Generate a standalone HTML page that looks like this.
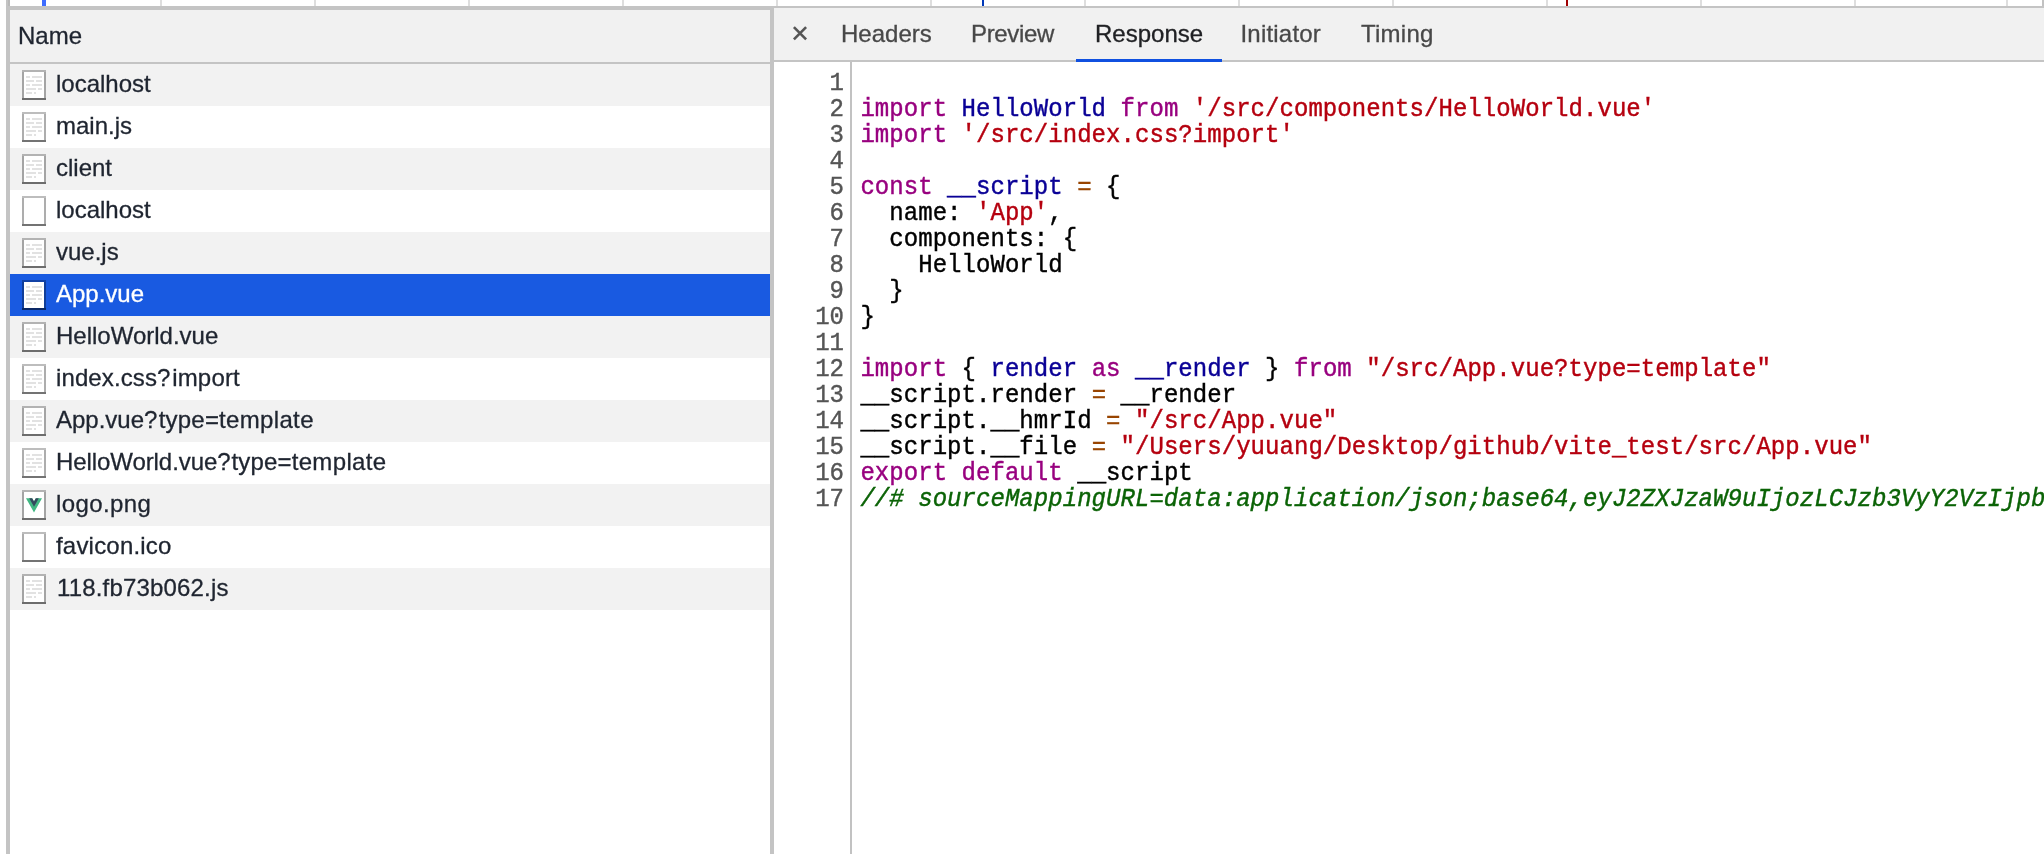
<!DOCTYPE html>
<html>
<head>
<meta charset="utf-8">
<title>DevTools Network</title>
<style>
html,body{margin:0;padding:0;}
body{width:2044px;height:854px;position:relative;overflow:hidden;background:#fff;font-family:"Liberation Sans",sans-serif;-webkit-text-stroke:0.3px;}
.abs{position:absolute;}
#txt{position:absolute;left:0;top:0;width:2044px;height:854px;will-change:transform;}
/* top timeline strip */
.grid{position:absolute;top:0;height:6px;width:2px;background:#dedede;}
/* borders */
#lb{left:6px;top:0;width:4px;height:854px;background:#c4c4c4;}
#tbL{left:6px;top:6px;width:768px;height:4px;background:#c4c4c4;}
#tbR{left:774px;top:6px;width:1270px;height:2px;background:#c4c4c4;}
#vd{left:770px;top:6px;width:4px;height:848px;background:#c4c4c4;}
/* left header */
#lh{left:10px;top:10px;width:760px;height:52px;background:#f1f1f1;}
#lhb{left:10px;top:62px;width:760px;height:2px;background:#c4c4c4;}
#lh span{position:absolute;left:8px;top:12px;font-size:24px;line-height:28px;color:#1f2530;}
/* rows */
.row{position:absolute;left:10px;width:760px;height:42px;background:#fff;}
.row.odd{background:#f2f2f2;}
.row.sel{background:#195ae1;}
.row .t{position:absolute;left:46px;top:6px;font-size:24px;line-height:28px;color:#1f2530;white-space:nowrap;}
.row.sel .t{color:#fff;}
.ico{position:absolute;left:12px;top:6px;width:24px;height:30px;}
/* right tabs */
#th{left:774px;top:8px;width:1270px;height:52px;background:#f1f1f1;}
#thb{left:774px;top:60px;width:1270px;height:2px;background:#c4c4c4;}
.tab{position:absolute;top:20px;font-size:24px;line-height:28px;color:#484848;white-space:nowrap;}
.tab.act{color:#202124;}
#ul{left:1076px;top:59px;width:146px;height:3px;background:#1050e0;}
/* code */
#gut{left:850px;top:62px;width:2px;height:792px;background:#c2c2c2;}
.ln{position:absolute;left:774px;width:70px;transform:scaleY(1.09);transform-origin:0 19.4px;text-align:right;font-family:"Liberation Mono",monospace;font-size:24px;line-height:26px;color:#555;white-space:pre;}
.cl{position:absolute;left:860.4px;letter-spacing:0.049px;transform:scaleY(1.09);transform-origin:0 19.4px;font-family:"Liberation Mono",monospace;font-size:24px;line-height:26px;color:#000;white-space:pre;}
.ln,.cl{-webkit-text-stroke:0.4px;}
.k{color:#98007f;}
.d{color:#0a0096;}
.s{color:#b5000f;}
.o{color:#984500;}
.c{color:#0b6306;font-style:italic;}
</style>
</head>
<body>
<div id="txt">
<!-- timeline grid lines -->
<div class="grid" style="left:160px"></div>
<div class="grid" style="left:314px"></div>
<div class="grid" style="left:468px"></div>
<div class="grid" style="left:622px"></div>
<div class="grid" style="left:776px"></div>
<div class="grid" style="left:930px"></div>
<div class="grid" style="left:1084px"></div>
<div class="grid" style="left:1238px"></div>
<div class="grid" style="left:1392px"></div>
<div class="grid" style="left:1546px"></div>
<div class="grid" style="left:1700px"></div>
<div class="grid" style="left:1854px"></div>
<div class="grid" style="left:2006px"></div>
<div class="abs" style="left:2042px;top:0;width:2px;height:6px;background:#c2c2c2"></div>
<div class="abs" style="left:42px;top:0;width:4px;height:6px;background:#3d6cff"></div>
<div class="abs" style="left:982px;top:0;width:2px;height:6px;background:#0038b8"></div>
<div class="abs" style="left:1566px;top:0;width:2px;height:6px;background:#a00002"></div>

<div class="abs" id="lb"></div>
<div class="abs" style="left:8px;top:0;width:2px;height:6px;background:#b9b9b9"></div>
<div class="abs" id="tbL"></div>
<div class="abs" id="tbR"></div>

<!-- left header -->
<div class="abs" id="lh"><span>Name</span></div>
<div class="abs" id="lhb"></div>

<!-- rows -->
<div class="row odd" style="top:64px"><svg class="ico" width="24" height="30" viewBox="0 0 24 30"><rect x="2" y="2" width="20" height="26" fill="#fff"/><g fill="#000"><rect x="0" y="0" width="24" height="2" fill-opacity="0.26"/><rect x="0" y="2" width="2" height="26" fill-opacity="0.32"/><rect x="22" y="2" width="2" height="26" fill-opacity="0.32"/><rect x="0" y="28" width="24" height="2" fill-opacity="0.55"/></g><g fill="#e2e2e2"><rect x="4" y="6" width="4" height="2"/><rect x="10" y="6" width="10" height="2"/><rect x="4" y="10" width="8" height="2"/><rect x="14" y="10" width="6" height="2"/><rect x="4" y="14" width="4" height="2"/><rect x="10" y="14" width="10" height="2"/><rect x="4" y="18" width="10" height="2"/><rect x="16" y="18" width="4" height="2"/><rect x="4" y="22" width="6" height="2"/><rect x="12" y="22" width="2" height="2"/></g></svg><span class="t">localhost</span></div>
<div class="row" style="top:106px"><svg class="ico" width="24" height="30" viewBox="0 0 24 30"><rect x="2" y="2" width="20" height="26" fill="#fff"/><g fill="#000"><rect x="0" y="0" width="24" height="2" fill-opacity="0.26"/><rect x="0" y="2" width="2" height="26" fill-opacity="0.32"/><rect x="22" y="2" width="2" height="26" fill-opacity="0.32"/><rect x="0" y="28" width="24" height="2" fill-opacity="0.55"/></g><g fill="#e2e2e2"><rect x="4" y="6" width="4" height="2"/><rect x="10" y="6" width="10" height="2"/><rect x="4" y="10" width="8" height="2"/><rect x="14" y="10" width="6" height="2"/><rect x="4" y="14" width="4" height="2"/><rect x="10" y="14" width="10" height="2"/><rect x="4" y="18" width="10" height="2"/><rect x="16" y="18" width="4" height="2"/><rect x="4" y="22" width="6" height="2"/><rect x="12" y="22" width="2" height="2"/></g></svg><span class="t">main.js</span></div>
<div class="row odd" style="top:148px"><svg class="ico" width="24" height="30" viewBox="0 0 24 30"><rect x="2" y="2" width="20" height="26" fill="#fff"/><g fill="#000"><rect x="0" y="0" width="24" height="2" fill-opacity="0.26"/><rect x="0" y="2" width="2" height="26" fill-opacity="0.32"/><rect x="22" y="2" width="2" height="26" fill-opacity="0.32"/><rect x="0" y="28" width="24" height="2" fill-opacity="0.55"/></g><g fill="#e2e2e2"><rect x="4" y="6" width="4" height="2"/><rect x="10" y="6" width="10" height="2"/><rect x="4" y="10" width="8" height="2"/><rect x="14" y="10" width="6" height="2"/><rect x="4" y="14" width="4" height="2"/><rect x="10" y="14" width="10" height="2"/><rect x="4" y="18" width="10" height="2"/><rect x="16" y="18" width="4" height="2"/><rect x="4" y="22" width="6" height="2"/><rect x="12" y="22" width="2" height="2"/></g></svg><span class="t">client</span></div>
<div class="row" style="top:190px"><svg class="ico" width="24" height="30" viewBox="0 0 24 30"><rect x="2" y="2" width="20" height="26" fill="#fff"/><g fill="#000"><rect x="0" y="0" width="24" height="2" fill-opacity="0.26"/><rect x="0" y="2" width="2" height="26" fill-opacity="0.32"/><rect x="22" y="2" width="2" height="26" fill-opacity="0.32"/><rect x="0" y="28" width="24" height="2" fill-opacity="0.55"/></g></svg><span class="t">localhost</span></div>
<div class="row odd" style="top:232px"><svg class="ico" width="24" height="30" viewBox="0 0 24 30"><rect x="2" y="2" width="20" height="26" fill="#fff"/><g fill="#000"><rect x="0" y="0" width="24" height="2" fill-opacity="0.26"/><rect x="0" y="2" width="2" height="26" fill-opacity="0.32"/><rect x="22" y="2" width="2" height="26" fill-opacity="0.32"/><rect x="0" y="28" width="24" height="2" fill-opacity="0.55"/></g><g fill="#e2e2e2"><rect x="4" y="6" width="4" height="2"/><rect x="10" y="6" width="10" height="2"/><rect x="4" y="10" width="8" height="2"/><rect x="14" y="10" width="6" height="2"/><rect x="4" y="14" width="4" height="2"/><rect x="10" y="14" width="10" height="2"/><rect x="4" y="18" width="10" height="2"/><rect x="16" y="18" width="4" height="2"/><rect x="4" y="22" width="6" height="2"/><rect x="12" y="22" width="2" height="2"/></g></svg><span class="t">vue.js</span></div>
<div class="row sel" style="top:274px"><svg class="ico" width="24" height="30" viewBox="0 0 24 30"><rect x="2" y="2" width="20" height="26" fill="#fff"/><g fill="#000"><rect x="0" y="0" width="24" height="2" fill-opacity="0.26"/><rect x="0" y="2" width="2" height="26" fill-opacity="0.32"/><rect x="22" y="2" width="2" height="26" fill-opacity="0.32"/><rect x="0" y="28" width="24" height="2" fill-opacity="0.55"/></g><g fill="#e2e2e2"><rect x="4" y="6" width="4" height="2"/><rect x="10" y="6" width="10" height="2"/><rect x="4" y="10" width="8" height="2"/><rect x="14" y="10" width="6" height="2"/><rect x="4" y="14" width="4" height="2"/><rect x="10" y="14" width="10" height="2"/><rect x="4" y="18" width="10" height="2"/><rect x="16" y="18" width="4" height="2"/><rect x="4" y="22" width="6" height="2"/><rect x="12" y="22" width="2" height="2"/></g></svg><span class="t">App.vue</span></div>
<div class="row odd" style="top:316px"><svg class="ico" width="24" height="30" viewBox="0 0 24 30"><rect x="2" y="2" width="20" height="26" fill="#fff"/><g fill="#000"><rect x="0" y="0" width="24" height="2" fill-opacity="0.26"/><rect x="0" y="2" width="2" height="26" fill-opacity="0.32"/><rect x="22" y="2" width="2" height="26" fill-opacity="0.32"/><rect x="0" y="28" width="24" height="2" fill-opacity="0.55"/></g><g fill="#e2e2e2"><rect x="4" y="6" width="4" height="2"/><rect x="10" y="6" width="10" height="2"/><rect x="4" y="10" width="8" height="2"/><rect x="14" y="10" width="6" height="2"/><rect x="4" y="14" width="4" height="2"/><rect x="10" y="14" width="10" height="2"/><rect x="4" y="18" width="10" height="2"/><rect x="16" y="18" width="4" height="2"/><rect x="4" y="22" width="6" height="2"/><rect x="12" y="22" width="2" height="2"/></g></svg><span class="t">HelloWorld.vue</span></div>
<div class="row" style="top:358px"><svg class="ico" width="24" height="30" viewBox="0 0 24 30"><rect x="2" y="2" width="20" height="26" fill="#fff"/><g fill="#000"><rect x="0" y="0" width="24" height="2" fill-opacity="0.26"/><rect x="0" y="2" width="2" height="26" fill-opacity="0.32"/><rect x="22" y="2" width="2" height="26" fill-opacity="0.32"/><rect x="0" y="28" width="24" height="2" fill-opacity="0.55"/></g><g fill="#e2e2e2"><rect x="4" y="6" width="4" height="2"/><rect x="10" y="6" width="10" height="2"/><rect x="4" y="10" width="8" height="2"/><rect x="14" y="10" width="6" height="2"/><rect x="4" y="14" width="4" height="2"/><rect x="10" y="14" width="10" height="2"/><rect x="4" y="18" width="10" height="2"/><rect x="16" y="18" width="4" height="2"/><rect x="4" y="22" width="6" height="2"/><rect x="12" y="22" width="2" height="2"/></g></svg><span class="t"><span style="letter-spacing:0.11px">index.css</span><span style="margin-right:1.8px">?</span><span style="letter-spacing:0.17px">import</span></span></div>
<div class="row odd" style="top:400px"><svg class="ico" width="24" height="30" viewBox="0 0 24 30"><rect x="2" y="2" width="20" height="26" fill="#fff"/><g fill="#000"><rect x="0" y="0" width="24" height="2" fill-opacity="0.26"/><rect x="0" y="2" width="2" height="26" fill-opacity="0.32"/><rect x="22" y="2" width="2" height="26" fill-opacity="0.32"/><rect x="0" y="28" width="24" height="2" fill-opacity="0.55"/></g><g fill="#e2e2e2"><rect x="4" y="6" width="4" height="2"/><rect x="10" y="6" width="10" height="2"/><rect x="4" y="10" width="8" height="2"/><rect x="14" y="10" width="6" height="2"/><rect x="4" y="14" width="4" height="2"/><rect x="10" y="14" width="10" height="2"/><rect x="4" y="18" width="10" height="2"/><rect x="16" y="18" width="4" height="2"/><rect x="4" y="22" width="6" height="2"/><rect x="12" y="22" width="2" height="2"/></g></svg><span class="t">App.vue<span style="margin-right:1.3px">?</span><span style="letter-spacing:0.2px">type</span>=<span style="letter-spacing:0.36px">template</span></span></div>
<div class="row" style="top:442px"><svg class="ico" width="24" height="30" viewBox="0 0 24 30"><rect x="2" y="2" width="20" height="26" fill="#fff"/><g fill="#000"><rect x="0" y="0" width="24" height="2" fill-opacity="0.26"/><rect x="0" y="2" width="2" height="26" fill-opacity="0.32"/><rect x="22" y="2" width="2" height="26" fill-opacity="0.32"/><rect x="0" y="28" width="24" height="2" fill-opacity="0.55"/></g><g fill="#e2e2e2"><rect x="4" y="6" width="4" height="2"/><rect x="10" y="6" width="10" height="2"/><rect x="4" y="10" width="8" height="2"/><rect x="14" y="10" width="6" height="2"/><rect x="4" y="14" width="4" height="2"/><rect x="10" y="14" width="10" height="2"/><rect x="4" y="18" width="10" height="2"/><rect x="16" y="18" width="4" height="2"/><rect x="4" y="22" width="6" height="2"/><rect x="12" y="22" width="2" height="2"/></g></svg><span class="t"><span style="letter-spacing:-0.08px">HelloWorld.vue</span><span style="margin-right:0.9px">?</span><span style="letter-spacing:0.2px">type</span>=<span style="letter-spacing:0.36px">template</span></span></div>
<div class="row odd" style="top:484px"><svg class="ico" width="24" height="30" viewBox="0 0 24 30"><rect x="2" y="2" width="20" height="26" fill="#fff"/><g fill="#000"><rect x="0" y="0" width="24" height="2" fill-opacity="0.26"/><rect x="0" y="2" width="2" height="26" fill-opacity="0.32"/><rect x="22" y="2" width="2" height="26" fill-opacity="0.32"/><rect x="0" y="28" width="24" height="2" fill-opacity="0.55"/></g><g transform="translate(4,8.2) scale(0.0611,0.0628)"><path fill="#41b883" d="M161.096.001l-30.225 52.351L100.647.001H-.005l130.877 226.688L261.749.001z"/><path fill="#34495e" d="M161.096.001l-30.225 52.351L100.647.001H52.346l78.526 136.01L209.398.001z"/></g></svg><span class="t"><span style="letter-spacing:0.4px">logo.png</span></span></div>
<div class="row" style="top:526px"><svg class="ico" width="24" height="30" viewBox="0 0 24 30"><rect x="2" y="2" width="20" height="26" fill="#fff"/><g fill="#000"><rect x="0" y="0" width="24" height="2" fill-opacity="0.26"/><rect x="0" y="2" width="2" height="26" fill-opacity="0.32"/><rect x="22" y="2" width="2" height="26" fill-opacity="0.32"/><rect x="0" y="28" width="24" height="2" fill-opacity="0.55"/></g></svg><span class="t"><span style="letter-spacing:0.2px">favicon.ico</span></span></div>
<div class="row odd" style="top:568px"><svg class="ico" width="24" height="30" viewBox="0 0 24 30"><rect x="2" y="2" width="20" height="26" fill="#fff"/><g fill="#000"><rect x="0" y="0" width="24" height="2" fill-opacity="0.26"/><rect x="0" y="2" width="2" height="26" fill-opacity="0.32"/><rect x="22" y="2" width="2" height="26" fill-opacity="0.32"/><rect x="0" y="28" width="24" height="2" fill-opacity="0.55"/></g><g fill="#e2e2e2"><rect x="4" y="6" width="4" height="2"/><rect x="10" y="6" width="10" height="2"/><rect x="4" y="10" width="8" height="2"/><rect x="14" y="10" width="6" height="2"/><rect x="4" y="14" width="4" height="2"/><rect x="10" y="14" width="10" height="2"/><rect x="4" y="18" width="10" height="2"/><rect x="16" y="18" width="4" height="2"/><rect x="4" y="22" width="6" height="2"/><rect x="12" y="22" width="2" height="2"/></g></svg><span class="t"><span style="margin-left:1px"></span><span style="letter-spacing:0.17px">118.fb73b062.js</span></span></div>

<div class="abs" id="vd"></div>

<!-- right tabs -->
<div class="abs" id="th"></div>
<div class="abs" id="thb"></div>
<svg class="abs" style="left:792px;top:25px" width="16" height="16" viewBox="0 0 16 16"><path d="M1.9 2.1 L14.1 14.3 M14.1 2.1 L1.9 14.3" stroke="#555" stroke-width="2.6" fill="none"/></svg>
<div class="tab" style="left:841px">Headers</div>
<div class="tab" style="left:971px;letter-spacing:-0.35px">Preview</div>
<div class="tab act" style="left:1095px">Response</div>
<div class="tab" style="left:1240.5px;letter-spacing:0.2px">Initiator</div>
<div class="tab" style="left:1361px;letter-spacing:0.25px">Timing</div>
<div class="abs" id="ul"></div>

<!-- code -->
<div class="abs" id="gut"></div>
<div class="ln" style="top:71px">1</div><div class="cl" style="top:71px"></div>
<div class="ln" style="top:97px">2</div><div class="cl" style="top:97px"><span class="k">import</span> <span class="d">HelloWorld</span> <span class="k">from</span> <span class="s">&#x27;/src/components/HelloWorld.vue&#x27;</span></div>
<div class="ln" style="top:123px">3</div><div class="cl" style="top:123px"><span class="k">import</span> <span class="s">&#x27;/src/index.css?import&#x27;</span></div>
<div class="ln" style="top:149px">4</div><div class="cl" style="top:149px"></div>
<div class="ln" style="top:175px">5</div><div class="cl" style="top:175px"><span class="k">const</span> <span class="d">__script</span> <span class="o">=</span> {</div>
<div class="ln" style="top:201px">6</div><div class="cl" style="top:201px">  name: <span class="s">&#x27;App&#x27;</span>,</div>
<div class="ln" style="top:227px">7</div><div class="cl" style="top:227px">  components: {</div>
<div class="ln" style="top:253px">8</div><div class="cl" style="top:253px">    HelloWorld</div>
<div class="ln" style="top:279px">9</div><div class="cl" style="top:279px">  }</div>
<div class="ln" style="top:305px">10</div><div class="cl" style="top:305px">}</div>
<div class="ln" style="top:331px">11</div><div class="cl" style="top:331px"></div>
<div class="ln" style="top:357px">12</div><div class="cl" style="top:357px"><span class="k">import</span> { <span class="d">render</span> <span class="k">as</span> <span class="d">__render</span> } <span class="k">from</span> <span class="s">&quot;/src/App.vue?type=template&quot;</span></div>
<div class="ln" style="top:383px">13</div><div class="cl" style="top:383px">__script.render <span class="o">=</span> __render</div>
<div class="ln" style="top:409px">14</div><div class="cl" style="top:409px">__script.__hmrId <span class="o">=</span> <span class="s">&quot;/src/App.vue&quot;</span></div>
<div class="ln" style="top:435px">15</div><div class="cl" style="top:435px">__script.__file <span class="o">=</span> <span class="s">&quot;/Users/yuuang/Desktop/github/vite_test/src/App.vue&quot;</span></div>
<div class="ln" style="top:461px">16</div><div class="cl" style="top:461px"><span class="k">export</span> <span class="k">default</span> __script</div>
<div class="ln" style="top:487px">17</div><div class="cl" style="top:487px"><span class="c">//# sourceMappingURL=data<span>:</span>application/json;base<span>64</span>,eyJ2ZXJzaW9uIjozLCJzb3VyY2VzIjpbIi</span></div>
</div>
</body>
</html>
